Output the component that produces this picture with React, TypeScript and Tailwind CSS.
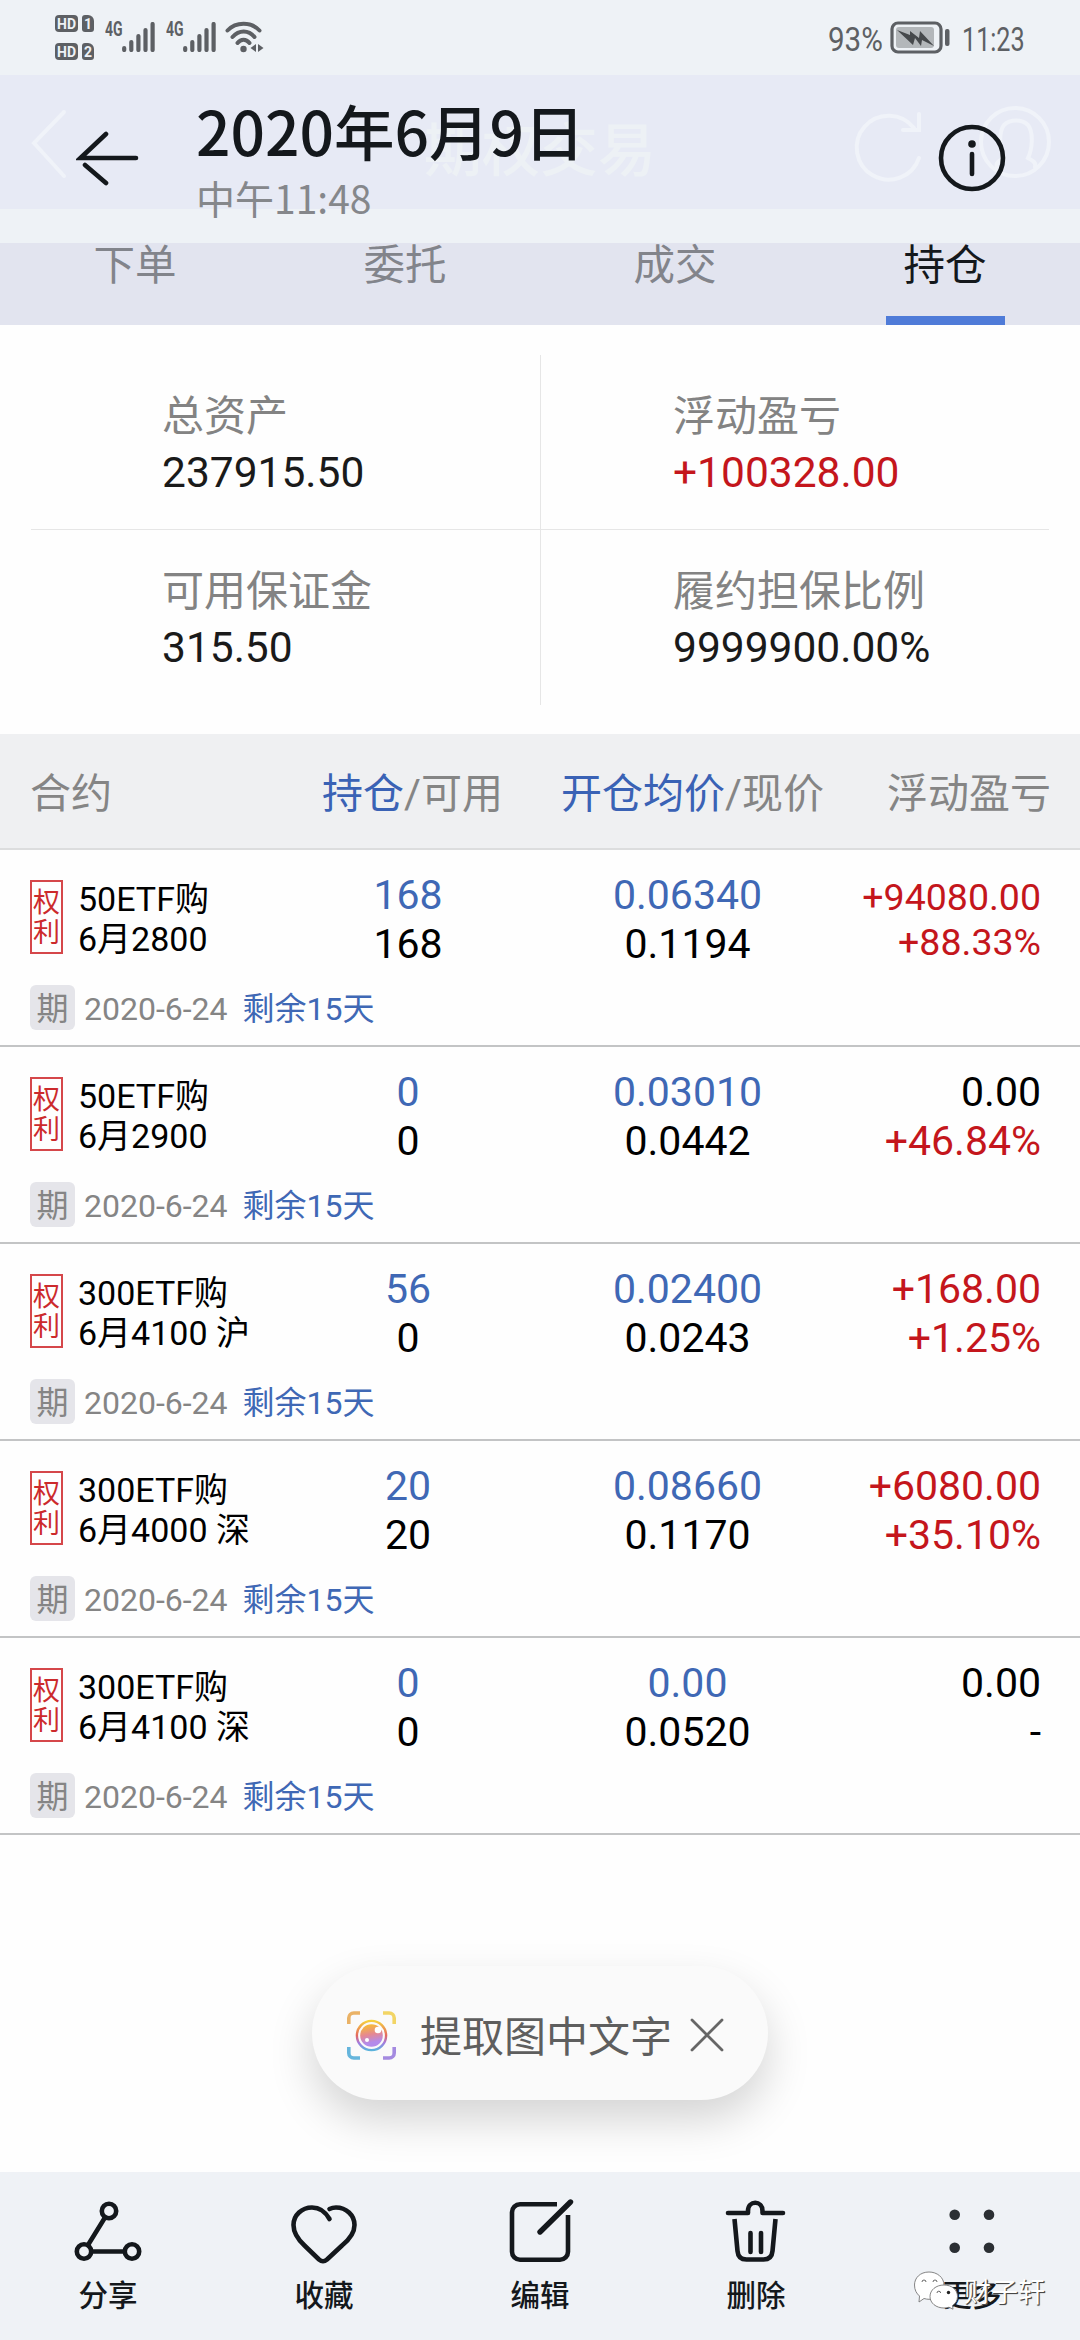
import React from "react";

const FONT = "font-['Roboto','Noto_Sans_CJK_SC',sans-serif]";
const CJK = "font-['Noto_Sans_CJK_SC',sans-serif]";

type Line = { text: string; tone: string };
type Position = {
  name: string;
  month: string;
  held: string;
  free: string;
  cost: string;
  price: string;
  profit: Line;
  rate: Line;
  compact?: boolean;
};

const RED = "text-[#c4161c]";
const BLACK = "text-black";

const positions: Position[] = [
  { name: "50ETF购", month: "6月2800", held: "168", free: "168", cost: "0.06340", price: "0.1194", profit: { text: "+94080.00", tone: RED }, rate: { text: "+88.33%", tone: RED }, compact: true },
  { name: "50ETF购", month: "6月2900", held: "0", free: "0", cost: "0.03010", price: "0.0442", profit: { text: "0.00", tone: BLACK }, rate: { text: "+46.84%", tone: RED } },
  { name: "300ETF购", month: "6月4100 沪", held: "56", free: "0", cost: "0.02400", price: "0.0243", profit: { text: "+168.00", tone: RED }, rate: { text: "+1.25%", tone: RED } },
  { name: "300ETF购", month: "6月4000 深", held: "20", free: "20", cost: "0.08660", price: "0.1170", profit: { text: "+6080.00", tone: RED }, rate: { text: "+35.10%", tone: RED } },
  { name: "300ETF购", month: "6月4100 深", held: "0", free: "0", cost: "0.00", price: "0.0520", profit: { text: "0.00", tone: BLACK }, rate: { text: "-", tone: BLACK } },
];

function SimBadge({ n }: { n: string }) {
  return (
    <div className="flex h-[17px] gap-[4px] text-[#eef2f6]">
      <span className="flex h-[17px] w-[23px] items-center justify-center rounded-[4px] bg-[#5d6064] text-[14px] leading-none font-bold">HD</span>
      <span className="flex h-[17px] w-[12px] items-center justify-center rounded-[3px] rounded-tr-[6px] bg-[#5d6064] text-[14px] leading-none font-bold">{n}</span>
    </div>
  );
}

function Signal() {
  return (
    <div className="flex h-[30px] items-start text-[#5d6064]">
      <span className="w-[17px] origin-left scale-x-[0.7] text-[20px] leading-[15px] font-bold">4G</span>
      <svg width="33" height="30" viewBox="0 0 33 30" stroke="#5d6064" strokeWidth="4.200" strokeLinecap="round">
        <path d="M2.2 26v2M9.3 20v8M16.4 14v14M23.5 8v20M30.6 2v26" />
      </svg>
    </div>
  );
}

function StatusBar() {
  return (
    <div className="flex h-[75px] items-start bg-[#eef2f6] text-[#5d6064]">
      <div className="mt-[15px] ml-[55px] flex flex-col gap-[11px]">
        <SimBadge n="1" />
        <SimBadge n="2" />
      </div>
      <div className="mt-[22px] ml-[11px] flex gap-[11px]">
        <Signal />
        <Signal />
      </div>
      <svg className="mt-[20px] ml-[9px]" width="40" height="34" viewBox="0 0 40 34" fill="none" stroke="#5d6064" strokeWidth="4" strokeLinecap="round">
        <path d="M2.5 10.5C11 1.500 26 1.500 34.500 10.500M7.500 17C14 9.500 23.500 9.500 29.500 17M12.500 23C16 18.500 21 18.500 24.500 23" />
        <circle cx="18.500" cy="29" r="3.200" fill="#5d6064" stroke="none" />
        <path d="M31 24v8l-5.500-4zM33 24v8l5.500-4z" fill="#5d6064" stroke="none" />
      </svg>
      <div className="mr-[57px] ml-auto flex items-start text-[34px] leading-[40px]">
        <span className="mt-[19px] w-[62px] origin-left scale-x-[0.87]">93%</span>
        <svg className="mt-[21px]" width="62" height="33" viewBox="0 0 62 33">
          <rect x="2" y="2" width="49" height="29" rx="6" fill="none" stroke="#5d6064" strokeWidth="3.200" />
          <rect x="6" y="6" width="38" height="21" rx="3" fill="#b3b7ba" />
          <path d="M7 9l13 5 0-4 9 7 1-7 14 15-12-6-1 6-6-8-2 7z" fill="#46494c" />
          <rect x="55" y="8" width="4.500" height="17" rx="2" fill="#5d6064" />
        </svg>
        <span className="mt-[19px] ml-[10px] w-[61px] origin-left scale-x-[0.74]">11:23</span>
      </div>
    </div>
  );
}

function Header() {
  return (
    <div className="relative flex h-[134px] bg-[#e7eaf5]">
      <svg className="absolute top-0 left-0" width="1080" height="134" fill="none" stroke="#f0f3f9" strokeWidth="4" strokeLinecap="round">
        <path d="M64 37L34 68l30 33" />
        <path d="M914 53a32 32 0 1 0 5 30M919 39v16h-16" />
        <circle cx="1015" cy="67" r="34" />
        <path d="M997 92c-2-5 4-7 7-9-4-8-6-25 0-33 6-6 18-6 24 0 6 8 4 25 0 33 3 2 9 4 7 9" />
      </svg>
      <div className={`absolute top-[38px] left-0 w-full text-center text-[58px] leading-[66px] font-medium text-[#edf1f5] ${CJK}`}>期权交易</div>
      <svg className="relative mt-[54px] ml-[76px]" width="64" height="58" fill="none" stroke="#14181c" strokeWidth="4.600" strokeLinecap="round">
        <path d="M30 5L4.500 29H60M9 36l21 18" />
      </svg>
      <div className={`relative z-10 ml-[56px] ${CJK}`}>
        <div className="mt-[17px] h-[76px] text-[60.500px] leading-[76px] font-medium whitespace-nowrap text-[#14181c]">2020年6月9日</div>
        <div className="mt-[5px] text-[39px] leading-[48px] whitespace-nowrap text-[#85878b]">中午11:48</div>
      </div>
      <svg className="relative mt-[49px] mr-[74px] ml-auto" width="68" height="68" fill="none" stroke="#14181c" strokeWidth="4.600" strokeLinecap="round">
        <circle cx="34" cy="34" r="31" />
        <circle cx="34" cy="20" r="3.800" fill="#14181c" stroke="none" />
        <path d="M34 30v20" />
      </svg>
    </div>
  );
}

function Tabs() {
  const tabs = ["下单", "委托", "成交", "持仓"];
  return (
    <div className="grid h-[82px] grid-cols-4 bg-[#e2e4ef] text-[41.500px]">
      {tabs.map((t, i) => (
        <div key={t} className="flex flex-col items-center">
          <span className={`h-[73px] leading-[45px] ${i === 3 ? "text-[#14181c]" : "text-[#82848b]"}`}>{t}</span>
          {i === 3 && <span className="h-[9px] w-[119px] bg-[#4f7bd8]" />}
        </div>
      ))}
    </div>
  );
}

function Stat({ label, value, red }: { label: string; value: string; red?: boolean }) {
  return (
    <div className="text-[42px] whitespace-nowrap">
      <div className="leading-[58px] text-[#838383]">{label}</div>
      <div className={`text-[42.500px] leading-[54px] ${red ? "text-[#c4161c]" : "text-[#1a1a1a]"}`}>{value}</div>
    </div>
  );
}

function Summary() {
  return (
    <div className="h-[409px] px-[31px] pt-[30px]">
      <div className="grid grid-cols-[510px_1fr]">
        <div className="h-[175px] border-r border-b border-[#e6e6e6] pt-[33px] pl-[131px]"><Stat label="总资产" value="237915.50" /></div>
        <div className="h-[175px] border-b border-[#e6e6e6] pt-[33px] pl-[132px]"><Stat label="浮动盈亏" value="+100328.00" red /></div>
        <div className="h-[175px] border-r border-[#e6e6e6] pt-[33px] pl-[131px]"><Stat label="可用保证金" value="315.50" /></div>
        <div className="h-[175px] pt-[33px] pl-[132px]"><Stat label="履约担保比例" value="9999900.00%" /></div>
      </div>
    </div>
  );
}

function TableHead() {
  return (
    <div className="flex h-[116px] border-b-2 border-[#dcddde] bg-[#eff0f2] pr-[29px] pl-[30px] text-[41px] leading-[120px] whitespace-nowrap text-[#858585]">
      <span className="w-[292px]">合约</span>
      <span className="w-[239px]"><span className="text-[#3a62b5]">持仓</span>/可用</span>
      <span><span className="text-[#3a62b5]">开仓均价</span>/现价</span>
      <span className="ml-auto">浮动盈亏</span>
    </div>
  );
}

function Row({ p }: { p: Position }) {
  return (
    <div className="flex h-[197px] flex-col border-b-2 border-[#c3c4c5]">
      <div className="grid h-[135px] grid-cols-[300px_216px_343px_182px] whitespace-nowrap">
        <div className="flex pt-[29px] pl-[30px]">
          <div className="mt-[1px] flex h-[74px] w-[33px] flex-col items-center justify-center border-2 border-[#d5474a] pt-[1px] text-[27px] leading-[30px] text-[#cc2a2c]">
            <span>权</span>
            <span>利</span>
          </div>
          <div className="ml-[15px] text-[34px] leading-[40px] text-black">
            <div>{p.name}</div>
            <div>{p.month}</div>
          </div>
        </div>
        <div className="pt-[21px] text-center text-[41px] leading-[49px]">
          <div className="text-[#3f68b5]">{p.held}</div>
          <div>{p.free}</div>
        </div>
        <div className="pt-[21px] text-center text-[41px] leading-[49px]">
          <div className="text-[#3f68b5]">{p.cost}</div>
          <div>{p.price}</div>
        </div>
        <div className={`flex flex-col items-end ${p.compact ? "pt-[25px] text-[37.500px] leading-[45px]" : "pt-[21px] text-[41px] leading-[49px]"}`}>
          <div className={p.profit.tone}>{p.profit.text}</div>
          <div className={p.rate.tone}>{p.rate.text}</div>
        </div>
      </div>
      <div className="flex h-[45px] pl-[30px] text-[32px] leading-[48px] text-[#858585]">
        <span className="w-[45px] rounded-[6px] bg-[#e5e5ea] text-center">期</span>
        <span className="ml-[9px]">2020-6-24</span>
        <span className="ml-[15px] text-[#3f68b5]">剩余15天</span>
      </div>
    </div>
  );
}

function ExtractPill() {
  return (
    <div className="mx-auto mt-[131px] flex h-[134px] w-[456px] items-center rounded-full bg-[#fafafa] pl-[34px] shadow-[0_20px_44px_rgba(0,0,0,0.17)]">
      <svg className="mt-[3px]" width="50" height="50" viewBox="0 0 50 50" fill="none">
        <defs>
          <linearGradient id="lens" x1="0.400" y1="0" x2="0.600" y2="1">
            <stop offset="0.050" stopColor="#f6b73c" />
            <stop offset="0.450" stopColor="#e58793" />
            <stop offset="0.800" stopColor="#b48bea" />
          </linearGradient>
          <linearGradient id="ring" x1="0.500" y1="0" x2="0.500" y2="1">
            <stop offset="0" stopColor="#f5d13f" />
            <stop offset="0.500" stopColor="#e4685f" />
            <stop offset="0.750" stopColor="#a57be0" />
            <stop offset="1" stopColor="#5bb3dc" />
          </linearGradient>
        </defs>
        <g strokeWidth="3.600">
          <path d="M2.800 14V8a5 5 0 0 1 5-5H14" stroke="#eab266" />
          <path d="M37 3h6.200a5 5 0 0 1 5 5v6" stroke="#f2d565" />
          <path d="M2.800 37v6a5 5 0 0 0 5 5H14" stroke="#65b5dc" />
          <path d="M37 48h6.200a5 5 0 0 0 5-5v-6" stroke="#a48ae0" />
        </g>
        <circle cx="25.500" cy="25.500" r="14.600" stroke="url(#ring)" strokeWidth="2.400" />
        <circle cx="25.500" cy="25.500" r="11.300" fill="url(#lens)" />
        <circle cx="32" cy="20" r="3.300" fill="#fff" />
        <circle cx="21" cy="30" r="2" fill="#fff" />
      </svg>
      <span className="mt-[10px] ml-[24px] text-[42px] leading-[60px] text-[#5e5e5e]">提取图中文字</span>
      <svg className="mt-[3px] ml-[17px]" width="36" height="36" stroke="#666" strokeWidth="2.800" strokeLinecap="round">
        <path d="M3 3l30 30M33 3L3 33" />
      </svg>
    </div>
  );
}

const icons = {
  share: (
    <>
      <circle cx="41" cy="15" r="7.200" />
      <circle cx="16" cy="55.500" r="7.200" />
      <circle cx="64" cy="55.500" r="7.200" />
      <path d="M37 21.500L20 49M23.500 55.500h33" />
    </>
  ),
  heart: <path d="M45.500 23C41 15 35 11.500 28 11.500 18 11.500 9.500 19 9.500 29c0 8 4 14 11 20.500l14.500 14c3 2.500 5 2.500 8 0l15-14C66 43 70.500 37 70.500 29c0-10-8.500-17.500-18.500-17.500-2.500 0-4.500.500-6.500 1.500" />,
  edit: (
    <>
      <path d="M57 8.200H20a8 8 0 0 0-8 8v39.500a8 8 0 0 0 8 8h40a8 8 0 0 0 8-8V19" strokeLinecap="butt" />
      <path d="M40 36L70.500 6" strokeWidth="5.400" />
    </>
  ),
  trash: (
    <>
      <path d="M12 17h20v-2c0-11 14.500-11 14.500 0v2H67" />
      <path d="M18.500 23l3 32c.500 6 4 8.500 9 8.500h17c5 0 8.500-2.500 9-8.500l3-32" strokeLinecap="butt" />
      <path d="M34.500 37v19M45 37v19" />
    </>
  ),
  more: (
    <g fill="#2b2f33" stroke="none">
      <circle cx="22.700" cy="18.700" r="5.300" />
      <circle cx="57" cy="18.700" r="5.300" />
      <circle cx="22.700" cy="51.700" r="5.300" />
      <circle cx="57" cy="51.700" r="5.300" />
    </g>
  ),
};

function Action({ icon, label }: { icon: React.ReactNode; label: string }) {
  return (
    <div className="flex flex-col items-center pt-[24px]">
      <svg width="80" height="72" viewBox="0 0 80 72" fill="none" stroke="#14181c" strokeWidth="4.600" strokeLinecap="round" strokeLinejoin="round">{icon}</svg>
      <span className={`mt-[5px] text-[29.500px] leading-[40px] font-medium text-[#14181c] ${CJK}`}>{label}</span>
    </div>
  );
}

function Watermark() {
  return (
    <div className="absolute top-[98px] left-[913px] flex items-start">
      <svg width="46" height="40" viewBox="0 0 46 40" fill="#fff" stroke="#777" strokeWidth="0.900">
        <path d="M16 2C7 2 1.500 8 1.500 15c0 5 2 8.500 5 11l-.500 6 5-3.500c2 .500 3 .800 5 .800 8.500 0 15-6 15-14S24 2 16 2z" />
        <path d="M31 15c-8 0-14 5-14 11.500S23 38 31 38c2 0 3.500-.300 5-.800l4 2-.500-3.700c3-2 5-5 5-9C44.500 20 39 15 31 15z" />
        <g fill="none" stroke="#555">
          <path d="M9 12a2 2 0 0 1 4 0M20 12a2 2 0 0 1 4 0M24 23a1.800 1.800 0 0 1 3.600 0" />
        </g>
        <circle cx="35.500" cy="22.500" r="1.700" fill="#222" stroke="none" />
      </svg>
      <span className="ml-[5px] text-[27px] leading-[46px] whitespace-nowrap text-white [text-shadow:1px_1px_1px_#444,1px_1px_0_#666]">财子轩</span>
    </div>
  );
}

function BottomBar() {
  return (
    <div className="relative mt-auto grid h-[168px] grid-cols-5 bg-[#eff2f6]">
      <Action icon={icons.share} label="分享" />
      <Action icon={icons.heart} label="收藏" />
      <Action icon={icons.edit} label="编辑" />
      <Action icon={icons.trash} label="删除" />
      <Action icon={icons.more} label="更多" />
      <Watermark />
    </div>
  );
}

export default function App() {
  return (
    <div className={`flex h-[2340px] w-[1080px] flex-col overflow-hidden bg-[#fefefe] ${FONT}`}>
      <StatusBar />
      <Header />
      <div className="h-[34px] bg-[#eef2f6]" />
      <Tabs />
      <Summary />
      <TableHead />
      {positions.map((p, i) => (
        <Row key={i} p={p} />
      ))}
      <ExtractPill />
      <BottomBar />
    </div>
  );
}
